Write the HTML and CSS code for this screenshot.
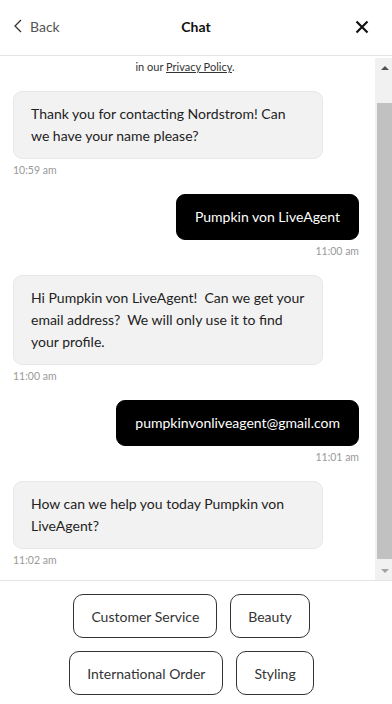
FILE: index.html
```html
<!DOCTYPE html>
<html>
<head>
<meta charset="utf-8">
<link rel="stylesheet" href="styles.css">
</head>
<body>
<div class="app">
  <header class="header">
    <div class="back">
      <svg class="chev" width="8" height="14" viewBox="0 0 8 14"><path d="M7 1 L1 7 L7 13" fill="none" stroke="#333" stroke-width="1.3"/></svg>
      <span>Back</span>
    </div>
    <div class="title">Chat</div>
    <svg class="close" width="14" height="14" viewBox="0 0 14 14"><path d="M1.5 1.5 L12.5 12.5 M12.5 1.5 L1.5 12.5" stroke="#111" stroke-width="2.2"/></svg>
  </header>
  <div class="body">
    <div class="messages">
      <p class="privacy">in our <a href="#">Privacy Policy</a>.</p>
      <div class="msg agent">
        <div class="bubble">Thank you for contacting Nordstrom! Can we have your name please?</div>
        <div class="time">10:59 am</div>
      </div>
      <div class="msg user">
        <div class="bubble">Pumpkin von LiveAgent</div>
        <div class="time">11:00 am</div>
      </div>
      <div class="msg agent">
        <div class="bubble">Hi Pumpkin von LiveAgent!&nbsp; Can we get your email address?&nbsp; We will only use it to find your profile.</div>
        <div class="time">11:00 am</div>
      </div>
      <div class="msg user">
        <div class="bubble">pumpkinvonliveagent@gmail.com</div>
        <div class="time">11:01 am</div>
      </div>
      <div class="msg agent">
        <div class="bubble">How can we help you today Pumpkin von LiveAgent?</div>
        <div class="time">11:02 am</div>
      </div>
    </div>
    <div class="scrollbar">
      <div class="arrow up"></div>
      <div class="thumb"></div>
      <div class="arrow down"></div>
    </div>
  </div>
  <footer class="footer">
    <div class="options">
      <button class="opt">Customer Service</button>
      <button class="opt">Beauty</button>
      <button class="opt">International Order</button>
      <button class="opt">Styling</button>
    </div>
  </footer>
</div>
</body>
</html>
```
FILE: styles.css
```css
* { box-sizing: border-box; }
html, body { margin: 0; padding: 0; background: #fff; }
body { font-family: Lato, "Noto Sans", sans-serif; color: #222; }
.app { width: 392px; height: 704px; display: flex; flex-direction: column; overflow: hidden; }
.header {
  height: 56px; flex: none; display: flex; align-items: center; justify-content: space-between;
  padding: 0 23px 0 14px; border-bottom: 1px solid #e4e4e4; position: relative;
}
.back { display: flex; align-items: center; gap: 8px; font-size: 14px; color: #555; margin-top: -2px; }
.chev { display: block; margin-top: -1px; }
.title { position: absolute; left: 0; right: 0; text-align: center; font-weight: 700; font-size: 14px; color: #111; pointer-events: none; margin-top: -2px; }
.close { display: block; margin-top: -1px; }
.body { height: 522px; flex: none; margin-top: 2px; display: flex; }
.messages { flex: 1; padding: 0 16px 0 13px; overflow: hidden; }
.privacy { margin: 2px 0 0; font-size: 11px; line-height: 14px; text-align: center; color: #333; padding-right: 2px; }
.privacy a { color: #333; text-decoration: underline; }
.msg { display: flex; flex-direction: column; margin-bottom: 17px; }
.privacy + .msg { margin-top: 17px; }
.bubble { font-size: 14px; line-height: 22px; padding: 11px 17px; border-radius: 9px; }
.agent { align-items: flex-start; }
.agent .bubble { width: 310px; background: #f2f2f2; border: 1px solid #e8e8e8; color: #222; }
.user { align-items: flex-end; }
.user .bubble { background: #000; color: #fff; border: 1px solid #000; padding: 11px 17px; }
.user .bubble { padding: 11px 18px; }
.time { font-size: 10.5px; line-height: 14px; margin-top: 4px; color: #999; }
.scrollbar { width: 17px; flex: none; background: #f1f1f1; display: flex; flex-direction: column; align-items: stretch; }
.arrow { height: 17px; flex: none; display: flex; justify-content: center; align-items: center; }
.arrow::before { content: ""; width: 0; height: 0; border-left: 4px solid transparent; border-right: 4px solid transparent; }
.up::before { border-bottom: 4px solid #505050; margin-top: 3px; margin-left: 2px; }
.down::before { border-top: 4px solid #a3a3a3; margin-bottom: -2px; margin-left: 2px; }
.thumb { margin: 28px 0 0 2px; height: 456px; background: #c1c1c1; }
.down { margin-top: auto; margin-bottom: 2px; }
.footer { flex: 1; border-top: 1px solid #e4e4e4; padding: 13px 9px 0 0; }
.options { display: flex; flex-wrap: wrap; justify-content: center; gap: 13px; padding: 0 30px; }
.opt {
  font-family: Lato, "Noto Sans", sans-serif; font-size: 14px; color: #333; background: #fff;
  border: 1px solid #333; border-radius: 10px; height: 44px; padding: 0 17px; cursor: pointer;
}
```
